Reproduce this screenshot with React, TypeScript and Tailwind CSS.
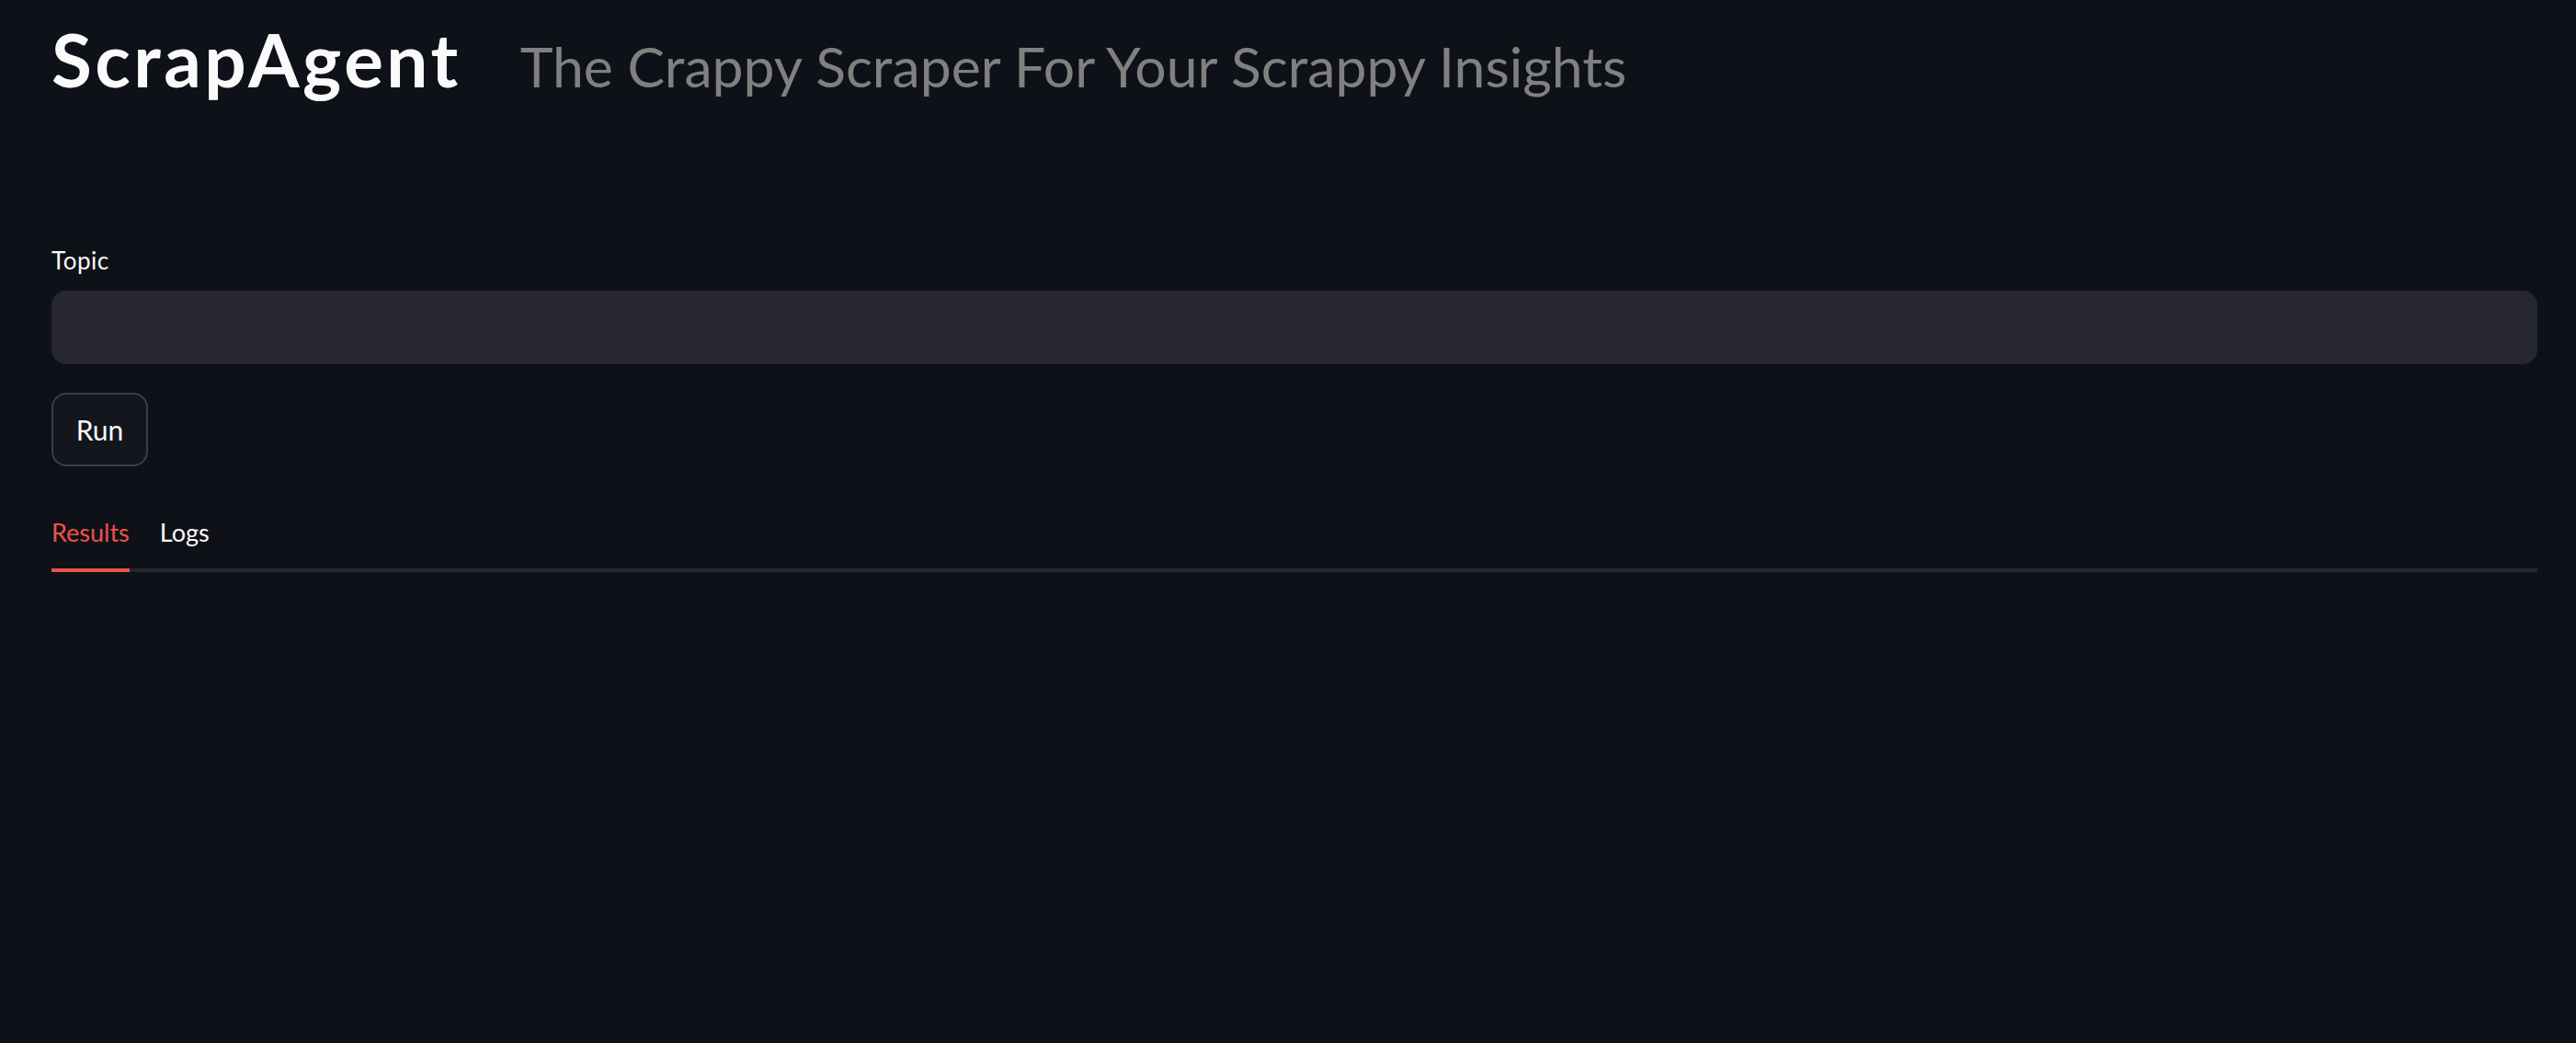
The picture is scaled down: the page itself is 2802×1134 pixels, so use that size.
import { useState } from "react";

const tabs = ["Results", "Logs"];

export default function App() {
  const [topic, setTopic] = useState("");
  const [active, setActive] = useState("Results");

  return (
    <div className="min-h-screen bg-[#0e1117] pl-[56px] pr-[42px] font-['Lato',sans-serif] text-[#fafafa]">
      {/* header */}
      <div className="flex items-baseline gap-[64px] pt-[16px]">
        <h1 className="text-[80px] font-bold leading-[96px] tracking-[3.5px]">ScrapAgent</h1>
        <span className="text-[60.7px] leading-[96px] text-[#808080]">The Crappy Scraper For Your Scrappy Insights</span>
      </div>

      {/* topic input */}
      <label className="mt-[145px] block text-[26px] leading-[36px] tracking-[0.5px]">Topic</label>
      <input
        className="mt-[15px] block h-[80px] w-full rounded-[16px] bg-[#262730] px-[24px] text-[28px] outline-none"
        value={topic}
        onChange={(e) => setTopic(e.target.value)}
      />

      <button
        type="button"
        className="mt-[31px] h-[80px] w-[105px] rounded-[16px] border-2 border-[#3d3f46] bg-[#13161d] text-[30px]"
      >
        Run
      </button>

      {/* tabs */}
      <div className="mt-[55px] flex gap-[33px] border-b-4 border-[#262730]">
        {tabs.map((t) => (
          <button
            key={t}
            type="button"
            onClick={() => setActive(t)}
            className={
              t === active
                ? "-mb-[4px] border-b-4 border-[#ee5149] pb-[22px] text-[27px] leading-[34px] text-[#ee5149]"
                : "-mb-[4px] border-b-4 border-transparent pb-[22px] text-[27px] leading-[34px] text-[#fafafa]"
            }
          >
            {t}
          </button>
        ))}
      </div>
    </div>
  );
}
